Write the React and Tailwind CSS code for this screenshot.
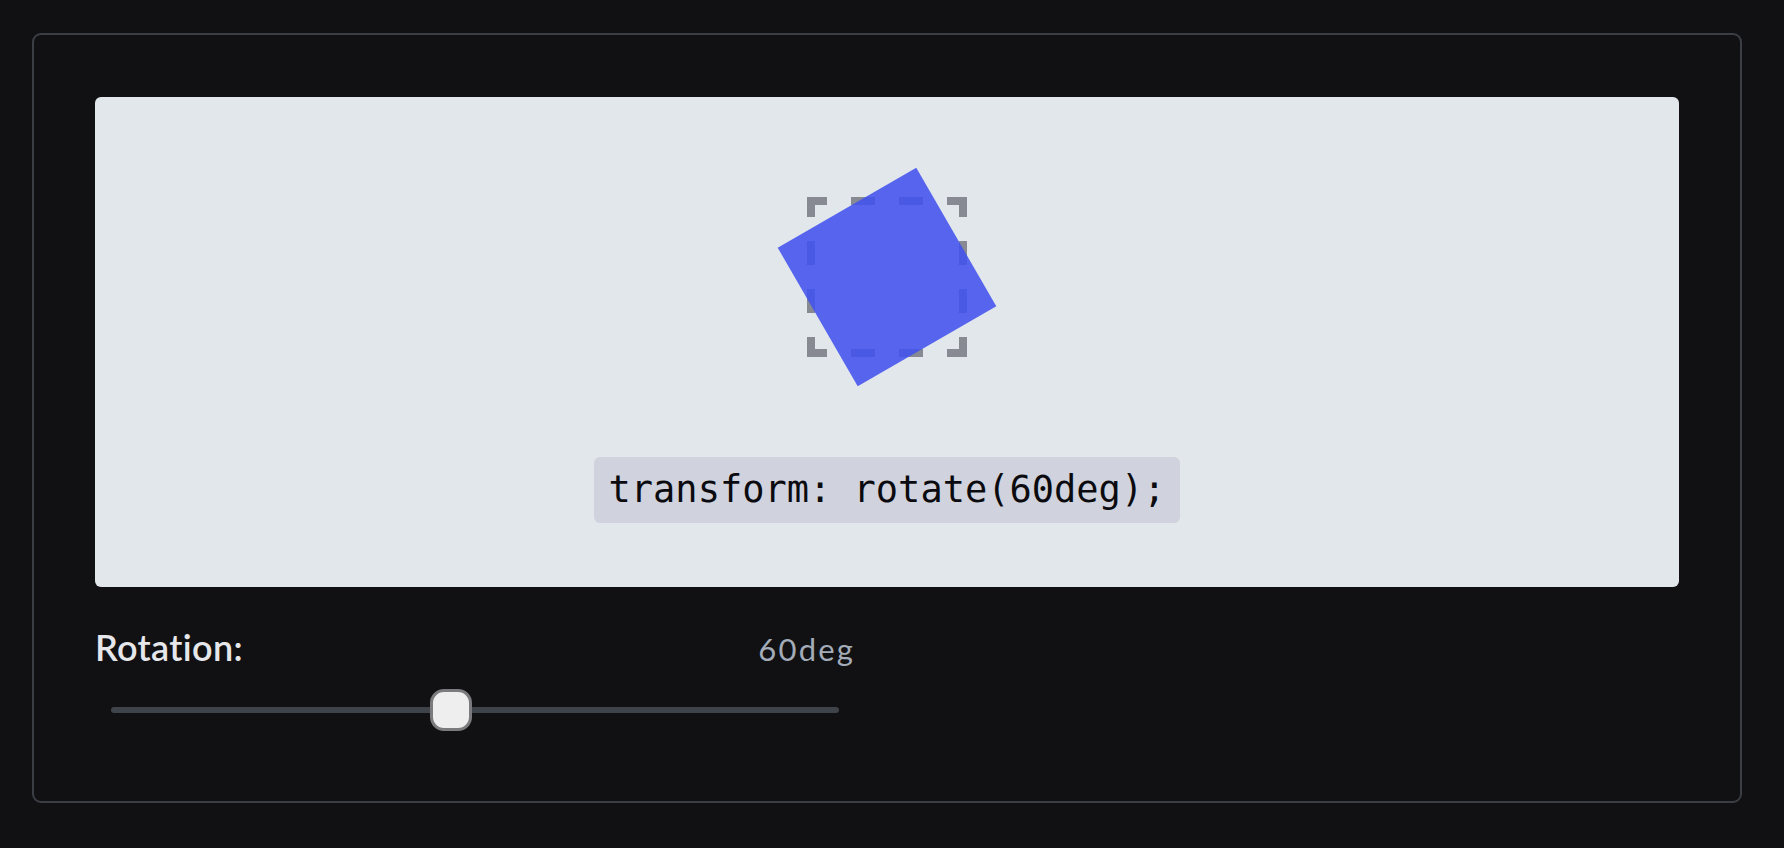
import React, { useState } from "react";

// dashed "original position" outline, drawn as plain rects on a 160 box
const dashes = [
  // corners
  [0, 0, 20, 8], [0, 0, 8, 20],
  [140, 0, 20, 8], [152, 0, 8, 20],
  [0, 152, 20, 8], [0, 140, 8, 20],
  [140, 152, 20, 8], [152, 140, 8, 20],
  // top / bottom
  [44, 0, 24, 8], [92, 0, 24, 8],
  [44, 152, 24, 8], [92, 152, 24, 8],
  // left / right
  [0, 44, 8, 24], [0, 92, 8, 24],
  [152, 44, 8, 24], [152, 92, 8, 24],
];

const App = () => {
  const [rotation] = useState(60);

  // thumb sits at 335px along a 760px wide control
  const thumbLeft = 335;

  return (
    <div
      className="min-h-screen w-full bg-[#111113] pl-[32px] pt-[33px]"
      style={{ fontFamily: "Lato, 'Noto Sans', sans-serif" }}
    >
      <div className="w-[1710px] h-[770px] rounded-[9px] border-2 border-[#3b3e44] px-[61px] pt-[62px]">
        {/* Preview */}
        <div className="h-[490px] rounded-md bg-[#e2e7ec] flex flex-col items-center pt-[100px]">
          <div className="relative w-[160px] h-[160px]">
            <svg className="absolute inset-0" width="160" height="160" viewBox="0 0 160 160">
              {dashes.map(([x, y, w, h], i) => (
                <rect key={i} x={x} y={y} width={w} height={h} fill="#878a93" />
              ))}
            </svg>
            <div className="absolute inset-0 bg-[#4252ee]/[0.88] rotate-[60deg]"></div>
          </div>

          <div
            className="mt-[100px] h-[66px] px-[15px] flex items-center rounded-md bg-[#d0d3dd] text-[37px] text-[#0b0b0f]"
            style={{ fontFamily: "'DejaVu Sans Mono', 'Liberation Mono', monospace" }}
          >
            transform: rotate({rotation}deg);
          </div>
        </div>

        {/* Control */}
        <div className="w-[760px] mt-[42px]">
          <div className="flex items-baseline justify-between leading-none">
            <span className="text-[36px] font-semibold tracking-[0.01em] text-[#e6e7ea]">Rotation:</span>
            <span className="text-[31px] tracking-[0.07em] text-[#a3acb8]">{rotation}deg</span>
          </div>
          <div className="relative h-[42px] mt-[24px]">
            <div className="absolute left-[16px] right-[16px] top-[18px] h-[6px] rounded-full bg-[#3f444b]"></div>
            <div
              className="absolute top-0 w-[42px] h-[42px] rounded-[14px] border-[3px] border-[#7b7b7d] bg-[#eeeeee]"
              style={{ left: thumbLeft }}
            ></div>
          </div>
        </div>
      </div>
    </div>
  );
};

export default App;
